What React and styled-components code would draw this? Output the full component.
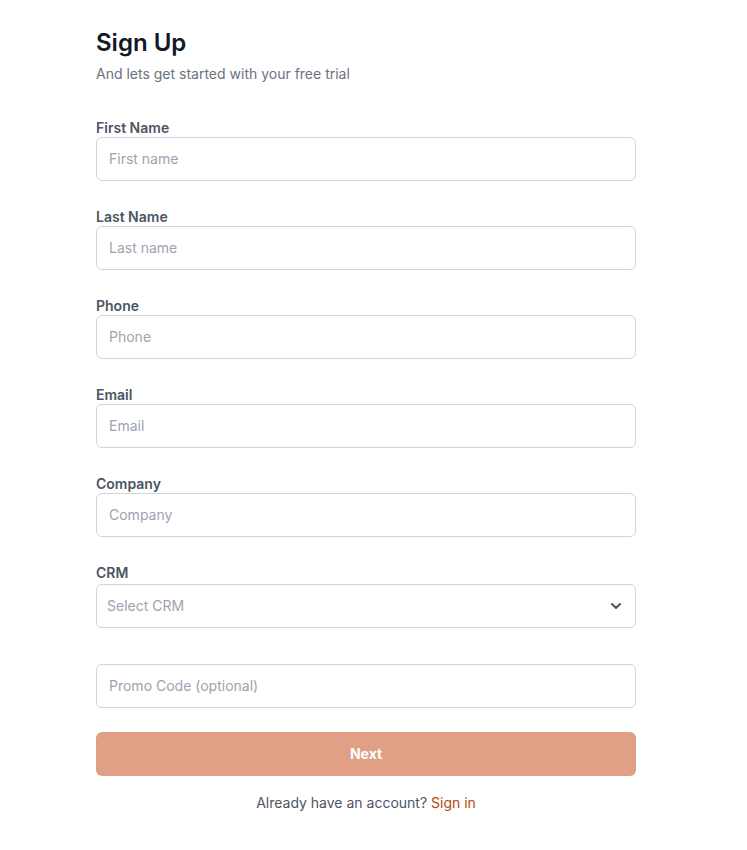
import React, { useState } from 'react';
import styled, { createGlobalStyle } from 'styled-components';

const colors = {
  heading: '#111827',
  text: '#4b5563',
  muted: '#6b7280',
  border: '#d1d5db',
  placeholder: '#9ca3af',
  accent: '#e0a086',
  link: '#b4490f',
};

const GlobalStyle = createGlobalStyle`
  body {
    margin: 0;
    background: #ffffff;
    font-family: Inter, "Noto Sans", sans-serif;
  }
  * { box-sizing: border-box; }
`;

const Page = styled.div`
  width: 540px;
  margin-left: 96px;
  padding-top: 27px;
`;

const Title = styled.h1`
  margin: 0;
  font-size: 24px;
  line-height: 32px;
  font-weight: 600;
  color: ${colors.heading};
`;

const Subtitle = styled.p`
  margin: 5px 0 0;
  font-size: 14px;
  line-height: 20px;
  color: ${colors.muted};
`;

const Form = styled.form`
  display: flex;
  flex-direction: column;
  margin-top: 33px;
`;

const Field = styled.div`
  display: flex;
  flex-direction: column;
  margin-bottom: ${(p) => p.$gap || 25}px;
`;

const Label = styled.label`
  padding-top: 2px;
  font-size: 14px;
  line-height: 18px;
  font-weight: 600;
  color: ${colors.text};
`;

const Input = styled.input`
  height: 44px;
  width: 100%;
  padding: 0 12px 2px;
  border: 1px solid ${colors.border};
  border-radius: 6px;
  font-family: inherit;
  font-size: 14px;
  color: ${colors.heading};
  background: #fff;
  outline: none;

  &::placeholder {
    color: ${colors.placeholder};
  }
`;

const SelectWrap = styled.div`
  position: relative;
  margin-top: 2px;
`;

const Select = styled.select`
  height: 44px;
  width: 100%;
  padding: 0 10px 2px;
  border: 1px solid ${colors.border};
  border-radius: 6px;
  font-family: inherit;
  font-size: 14px;
  color: ${colors.placeholder};
  background: #fff;
  appearance: none;
  outline: none;
`;

const Chevron = styled.svg`
  position: absolute;
  right: 12px;
  top: 14px;
  pointer-events: none;
`;

const Button = styled.button`
  height: 44px;
  width: 100%;
  padding: 0 0 2px;
  border: none;
  border-radius: 6px;
  background: ${colors.accent};
  color: #fff;
  font-family: inherit;
  font-size: 14px;
  font-weight: 700;
  cursor: pointer;
`;

const Footer = styled.p`
  margin: 17px 0 0;
  text-align: center;
  font-size: 14px;
  line-height: 20px;
  color: ${colors.text};
`;

const Link = styled.a`
  color: ${colors.link};
  text-decoration: none;
`;

const fields = [
  { label: 'First Name', placeholder: 'First name' },
  { label: 'Last Name', placeholder: 'Last name' },
  { label: 'Phone', placeholder: 'Phone' },
  { label: 'Email', placeholder: 'Email' },
  { label: 'Company', placeholder: 'Company' },
];

const App = () => {
  const [crm, setCrm] = useState('');

  return (
    <>
      <GlobalStyle />
      <Page>
        <Title>Sign Up</Title>
        <Subtitle>And lets get started with your free trial</Subtitle>
        <Form onSubmit={(e) => e.preventDefault()}>
          {fields.map((f) => (
            <Field key={f.label}>
              <Label>{f.label}</Label>
              <Input type="text" placeholder={f.placeholder} />
            </Field>
          ))}
          <Field $gap={36}>
            <Label>CRM</Label>
            <SelectWrap>
              <Select value={crm} onChange={(e) => setCrm(e.target.value)}>
                <option value="">Select CRM</option>
                <option value="salesforce">Salesforce</option>
                <option value="hubspot">HubSpot</option>
              </Select>
              <Chevron width="16" height="16" viewBox="0 0 24 24" fill="none" stroke="#4b5563" strokeWidth="3" strokeLinecap="round" strokeLinejoin="round">
                <path d="M6 9l6 6 6-6" />
              </Chevron>
            </SelectWrap>
          </Field>
          <Field $gap={24}>
            <Input type="text" placeholder="Promo Code (optional)" />
          </Field>
          <Button type="submit">Next</Button>
        </Form>
        <Footer>
          Already have an account? <Link href="#">Sign in</Link>
        </Footer>
      </Page>
    </>
  );
};

export default App;
